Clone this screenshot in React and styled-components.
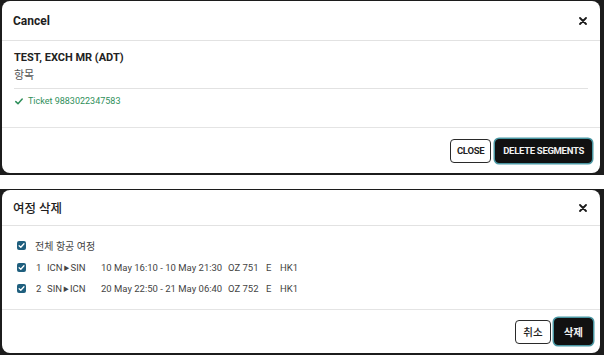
import React from 'react';
import styled, { createGlobalStyle } from 'styled-components';

const GlobalStyle = createGlobalStyle`
  html, body {
    margin: 0;
    padding: 0;
    background: #ffffff;
    font-family: Roboto, "Noto Sans CJK KR", "Noto Sans", sans-serif;
  }
`;

const Page = styled.div`
  width: 604px;
  height: 356px;
  display: flex;
  flex-direction: column;
  gap: 14px;
`;

const Frame = styled.div`
  background: #1c1c1c;
  padding: 1px 4px 2px 2px;
  height: ${p => p.h}px;
  box-sizing: border-box;
  display: flex;
`;

const Dialog = styled.div`
  flex: 1;
  background: #ffffff;
  border-radius: 8px;
  display: flex;
  flex-direction: column;
  overflow: hidden;
`;

const Header = styled.div`
  height: ${p => p.h}px;
  flex-shrink: 0;
  display: flex;
  align-items: center;
  justify-content: space-between;
  padding: 0 13px 0 11px;
  border-bottom: 1px solid #e2e2e2;
`;

const Title = styled.div`
  font-size: ${p => p.size || 12}px;
  font-weight: ${p => p.weight || 700};
  color: #1e1e1e;
`;

const CloseX = styled.svg`
  width: 8px;
  height: 8px;
`;

const Body = styled.div`
  flex: 1;
  padding: ${p => p.pad};
  border-bottom: 1px solid #e4e4e4;
  display: flex;
  flex-direction: column;
`;

const Name = styled.div`
  font-size: 11px;
  font-weight: 700;
  color: #222;
  line-height: 14px;
`;

const Sub = styled.div`
  font-size: 11px;
  color: #555;
  line-height: 14px;
  margin-top: 4px;
`;

const Rule = styled.div`
  height: 1px;
  background: #e2e2e2;
  margin: 5px 0 0 0;
`;

const Ticket = styled.div`
  display: flex;
  align-items: center;
  gap: 5px;
  margin-top: 6px;
  padding-left: 1px;
  font-size: 9px;
  color: #2f8f5b;
  line-height: 12px;
`;

const Footer = styled.div`
  height: ${p => p.h}px;
  flex-shrink: 0;
  display: flex;
  align-items: center;
  justify-content: flex-end;
  gap: ${p => p.gap || 3}px;
  padding-right: ${p => p.pr || 8}px;
`;

const OutlineBtn = styled.button`
  height: ${p => p.h}px;
  padding: 0 ${p => p.px}px;
  background: #fff;
  border: 1.5px solid #2a2a2a;
  border-radius: 4px;
  font-family: ${p => (p.kr ? 'Roboto, "Noto Sans CJK KR", sans-serif' : 'Roboto, sans-serif')};
  font-size: ${p => (p.kr ? 10.5 : 9.5)}px;
  font-weight: ${p => (p.kr ? 500 : 700)};
  letter-spacing: ${p => (p.kr ? 0 : -0.3)}px;
  color: #222;
  cursor: pointer;
`;

const SolidBtn = styled.button`
  height: ${p => p.h}px;
  padding: 0 ${p => p.px}px;
  background: #111;
  border: 1.5px solid #111;
  box-shadow: 0 0 0 1.5px #4a97a3;
  border-radius: 4px;
  font-family: ${p => (p.kr ? 'Roboto, "Noto Sans CJK KR", sans-serif' : 'Roboto, sans-serif')};
  font-size: ${p => (p.kr ? 10.5 : 9.5)}px;
  font-weight: 700;
  letter-spacing: ${p => (p.kr ? 0 : -0.3)}px;
  color: #f2f2f2;
  cursor: pointer;
`;

const Row = styled.div`
  display: flex;
  align-items: center;
  height: 21.5px;
  font-size: 9.5px;
  color: #444;
`;

const Box = styled.span`
  width: 9px;
  height: 9px;
  border-radius: 2px;
  background: #1f5f7e;
  display: inline-flex;
  align-items: center;
  justify-content: center;
  margin-right: ${p => p.mr}px;
  flex-shrink: 0;
`;

const Cell = styled.span`
  width: ${p => (p.w ? `${p.w}px` : 'auto')};
  flex-shrink: 0;
  white-space: nowrap;
  font-size: ${p => p.size || 9.5}px;
`;

const Arrow = styled.span`
  font-size: 6px;
  margin: 0 1px;
  position: relative;
  top: -1px;
`;

const X = () => (
  <CloseX viewBox="0 0 8 8">
    <path d="M1 1 L7 7 M7 1 L1 7" stroke="#1a1a1a" strokeWidth="1.8" strokeLinecap="round" />
  </CloseX>
);

const Check = () => (
  <svg width="7" height="7" viewBox="0 0 8 8">
    <path d="M1.3 4.2 L3.2 6 L6.8 2" stroke="#fff" strokeWidth="1.5" fill="none" strokeLinecap="round" strokeLinejoin="round" />
  </svg>
);

const segments = [
  { n: 1, from: 'ICN', to: 'SIN', time: '10 May 16:10 - 10 May 21:30', flight: 'OZ 751' },
  { n: 2, from: 'SIN', to: 'ICN', time: '20 May 22:50 - 21 May 06:40', flight: 'OZ 752' },
];

export default function App() {
  return (
    <>
      <GlobalStyle />
      <Page>
        <Frame h={175}>
          <Dialog>
            <Header h={39}>
              <Title>Cancel</Title>
              <X />
            </Header>
            <Body pad="10px 12px 0 12px">
              <Name>TEST, EXCH MR (ADT)</Name>
              <Sub>항목</Sub>
              <Rule />
              <Ticket>
                <svg width="8" height="7" viewBox="0 0 8 7">
                  <path d="M0.8 3.6 L3 5.8 L7.2 1" stroke="#2f8f5b" strokeWidth="1.5" fill="none" strokeLinecap="round" strokeLinejoin="round" />
                </svg>
                Ticket 9883022347583
              </Ticket>
            </Body>
            <Footer h={45} gap={4}>
              <OutlineBtn h={24} px={6}>CLOSE</OutlineBtn>
              <SolidBtn h={24} px={7}>DELETE SEGMENTS</SolidBtn>
            </Footer>
          </Dialog>
        </Frame>
        <Frame h={166}>
          <Dialog>
            <Header h={35}>
              <Title size={12.5} weight={500}>여정 삭제</Title>
              <X />
            </Header>
            <Body pad="9px 12px 0 15px">
              <Row>
                <Box mr={9}><Check /></Box>
                <Cell size={10}>전체 항공 여정</Cell>
              </Row>
              {segments.map(s => (
                <Row key={s.n}>
                  <Box mr={10}><Check /></Box>
                  <Cell w={11}>{s.n}</Cell>
                  <Cell w={54}>
                    {s.from}<Arrow>▶</Arrow>{s.to}
                  </Cell>
                  <Cell w={127}>{s.time}</Cell>
                  <Cell w={38}>{s.flight}</Cell>
                  <Cell w={14}>E</Cell>
                  <Cell>HK1</Cell>
                </Row>
              ))}
            </Body>
            <Footer h={43} pr={7}>
              <OutlineBtn h={24} px={7} kr>취소</OutlineBtn>
              <SolidBtn h={27} px={9} kr>삭제</SolidBtn>
            </Footer>
          </Dialog>
        </Frame>
      </Page>
    </>
  );
}
